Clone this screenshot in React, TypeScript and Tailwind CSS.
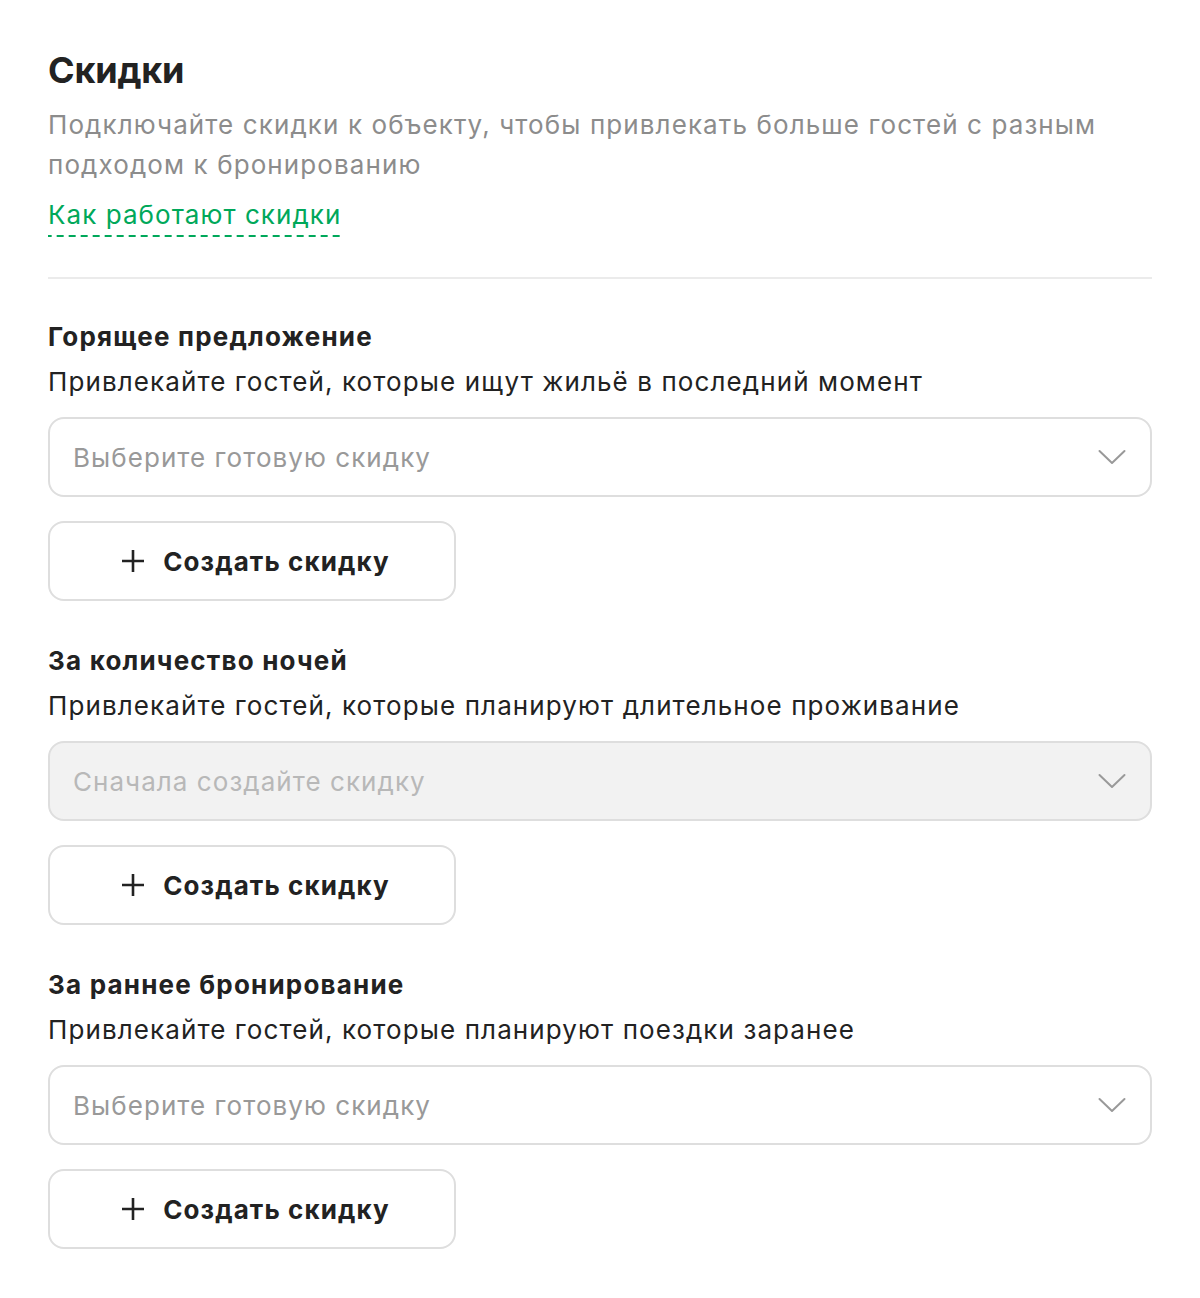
const sections = [
  {
    title: "Горящее предложение",
    text: "Привлекайте гостей, которые ищут жильё в последний момент",
    placeholder: "Выберите готовую скидку",
    disabled: false,
  },
  {
    title: "За количество ночей",
    text: "Привлекайте гостей, которые планируют длительное проживание",
    placeholder: "Сначала создайте скидку",
    disabled: true,
  },
  {
    title: "За раннее бронирование",
    text: "Привлекайте гостей, которые планируют поездки заранее",
    placeholder: "Выберите готовую скидку",
    disabled: false,
  },
];

function Chevron() {
  return (
    <svg width="28" height="16" viewBox="0 0 28 16" fill="none">
      <path d="M1.5 2 L14 14 L26.5 2" stroke="#999" strokeWidth="2" strokeLinecap="round" strokeLinejoin="round" />
    </svg>
  );
}

function PlusIcon() {
  return (
    <svg width="24" height="24" viewBox="0 0 24 24" fill="none">
      <path d="M12 1 V23 M1 12 H23" stroke="#222" strokeWidth="2.6" />
    </svg>
  );
}

export default function App() {
  return (
    <div className="min-h-[1298px] bg-white px-12 pt-12 pb-12 font-['Inter',sans-serif] text-[#222]">
      <h1 className="text-[36px] leading-[44px] font-bold tracking-[-0.2px]">Скидки</h1>
      <p className="mt-[13px] text-[26px] leading-[40px] tracking-[1.1px] text-[#8c8c8c]">
        Подключайте скидки к объекту, чтобы привлекать больше гостей с разным
        <br />
        подходом к бронированию
      </p>
      <div className="mt-[11px]">
        <a
          href="#"
          className="inline-block pb-[3px] text-[26px] leading-[38px] tracking-[1.05px] text-[#00a85a] bg-[linear-gradient(to_right,#00a85a_58%,transparent_0)] bg-[length:12px_2px] bg-repeat-x bg-bottom"
        >
          Как работают скидки
        </a>
      </div>
      <div className="mt-[40px] h-[2px] bg-[#ebebeb]" />

      {sections.map((s, i) => (
        <section key={s.title} className={i === 0 ? "mt-[42px]" : "mt-[44px]"}>
          <h2 className="text-[26px] leading-[32px] tracking-[1.2px] font-bold">{s.title}</h2>
          <p className="mt-[11px] text-[26px] leading-[36px] tracking-[1.1px]">{s.text}</p>
          <div
            className={
              "mt-[17px] flex h-[80px] items-center justify-between rounded-2xl border-2 border-[#dedede] pl-[23px] pr-[24px] " +
              (s.disabled ? "bg-[#f2f2f2]" : "bg-white")
            }
          >
            <span
              className={
                "text-[26px] tracking-[1.05px] " + (s.disabled ? "text-[#b8b8b8]" : "text-[#999]")
              }
            >
              {s.placeholder}
            </span>
            <Chevron />
          </div>
          <button className="mt-[24px] flex h-[80px] w-[408px] items-center justify-center gap-[18px] rounded-2xl border-2 border-[#dedede] bg-white pl-[7px]">
            <PlusIcon />
            <span className="text-[26px] tracking-[1.1px] font-bold">Создать скидку</span>
          </button>
        </section>
      ))}
    </div>
  );
}
